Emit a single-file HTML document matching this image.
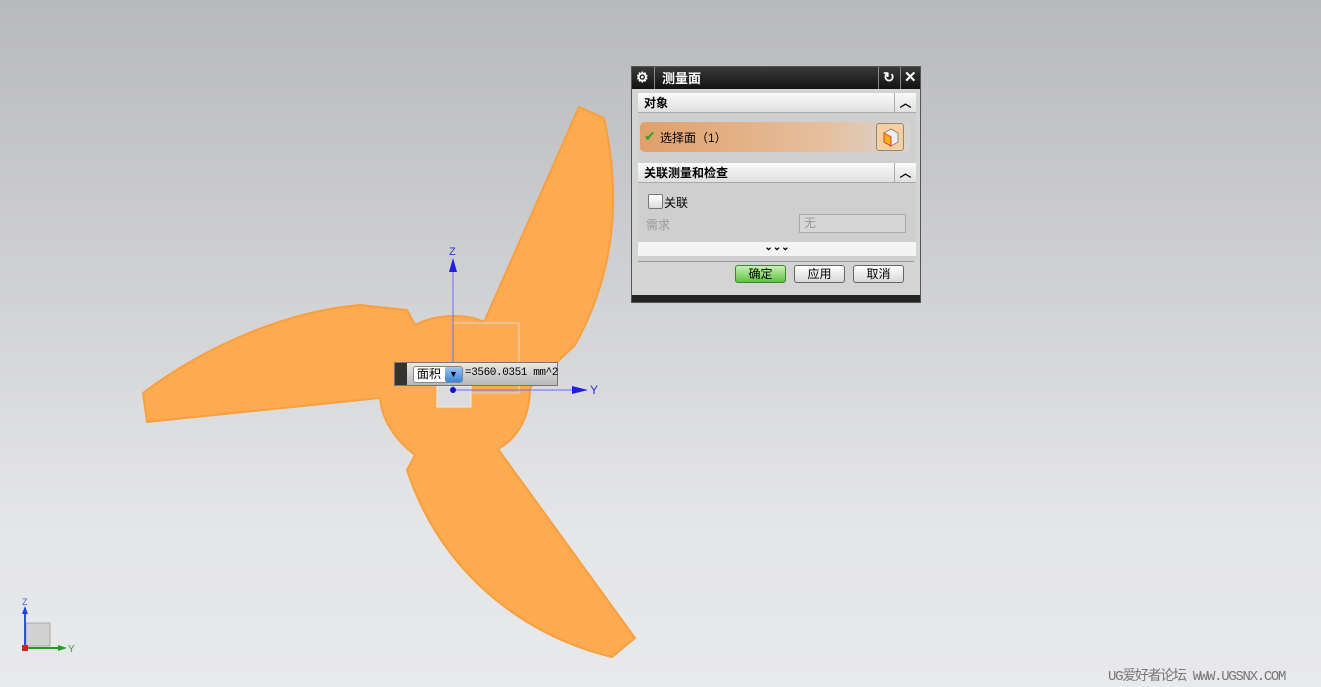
<!DOCTYPE html>
<html><head><meta charset="utf-8"><style>
*{margin:0;padding:0;box-sizing:border-box}
body{width:1321px;height:687px;overflow:hidden;position:relative;background:linear-gradient(#b8b9bb 0%,#d2d3d5 45%,#e4e5e7 75%,#e8e9eb 100%);font-family:"Liberation Sans","Noto Sans CJK SC",sans-serif;font-size:12px}
.abs{position:absolute;white-space:nowrap}
.dlg{left:631px;top:66px;width:290px;height:237px;background:#d4d4d4;border:1px solid #555}
.tb{left:0;top:0;width:288px;height:22px;background:linear-gradient(#3a3a3a,#111);color:#fff;font-weight:bold;font-size:13px}
.sec{position:relative;background:linear-gradient(#fafafa,#e0e0e0);height:20px;font-weight:bold;font-size:12px;line-height:20px;padding-left:6px;border-bottom:1px solid #aaa}
.btn{top:198px;height:18px;border:1px solid #666;border-radius:3px;background:linear-gradient(#fff,#d8d8d8);text-align:center;line-height:16px;font-size:12px}
</style></head><body>
<svg class="abs" style="left:0;top:0" width="1321" height="687">
<path d="M143,393 C200,350 280,312 360,305 L407,310 L415,325 C440,312 470,315 484,322 L579,107 L604,118 C622,200 614,275 575,345 L530,388 C530,420 515,440 498,449 L635,638 L612,657 C520,635 440,570 407,470 L415,455 C395,440 382,420 380,398 L147,422 Z" fill="#fdaa50" stroke="#f8a040" stroke-width="2" stroke-linejoin="round"/>
<rect x="453" y="323" width="66" height="70" fill="none" stroke="#d8d8e0" stroke-width="1"/>
<rect x="437" y="386" width="34" height="21" fill="#dcdcdc" stroke="#eee"/>
<line x1="453" y1="262" x2="453" y2="392" stroke="#6a6aff" stroke-width="1"/>
<polygon points="449,272 457,272 453,258" fill="#2020e0"/>
<text x="449" y="255" font-size="11" fill="#3030d0" font-family="Liberation Sans">Z</text>
<line x1="453" y1="390" x2="580" y2="390" stroke="#6a6aff"/>
<polygon points="572,386 572,394 588,390" fill="#2020e0"/>
<text x="590" y="394" font-size="12" fill="#3030d0" font-family="Liberation Sans">Y</text>
<circle cx="453" cy="390" r="3" fill="#1010d0"/>
<rect x="26" y="623" width="24" height="23" fill="#d2d2d2" stroke="#aaa"/>
<line x1="25" y1="646" x2="25" y2="610" stroke="#3050e0" stroke-width="2"/>
<polygon points="22,614 28,614 25,606" fill="#2040e0"/>
<text x="22" y="605" font-size="9" fill="#4060e0">Z</text>
<line x1="25" y1="648" x2="62" y2="648" stroke="#20a020" stroke-width="2"/>
<polygon points="58,645 58,651 67,648" fill="#20a020"/>
<text x="68" y="652" font-size="10" fill="#30a030">Y</text>
<rect x="22" y="645" width="6" height="6" fill="#d02020"/>
</svg>
<div class="abs" style="left:394px;top:362px;width:164px;height:24px;background:linear-gradient(#e8e8e8,#b8b8b8);border:1px solid #777">
 <div class="abs" style="left:0;top:0;width:12px;height:22px;background:#333"></div>
 <div class="abs" style="left:18px;top:3px;width:50px;height:17px;background:#fff;border:1px solid #888;border-radius:3px;font-size:12px;line-height:15px;padding-left:3px">面积</div>
 <div class="abs" style="left:50px;top:4px;width:17px;height:15px;background:linear-gradient(#9cc8f4,#3a82d8);border-radius:2px;color:#000;font-size:9px;text-align:center;line-height:15px">▼</div>
 <div class="abs" style="left:70px;top:4px;font-size:11px;font-family:'Liberation Mono',monospace;letter-spacing:-0.4px">=3560.0351 mm^2</div>
</div>
<div class="abs dlg">
 <div class="abs tb"><span class="abs" style="left:4px;top:2px;font-size:14px">⚙</span><div class="abs" style="left:22px;top:0;width:1px;height:22px;background:#888"></div><span class="abs" style="left:30px;top:1px">测量面</span>
 <div class="abs" style="left:246px;top:0;width:1px;height:22px;background:#888"></div><span class="abs" style="left:251px;top:2px;font-size:14px">↻</span><div class="abs" style="left:268px;top:0;width:1px;height:22px;background:#888"></div><span class="abs" style="left:272px;top:1px;font-size:15px">✕</span></div>
 <div class="abs" style="left:6px;top:26px;width:278px;height:168px;background:#cfcfcf">
  <div class="sec">对象<span class="abs" style="right:0;top:0;width:22px;height:20px;border-left:1px solid #aaa;text-align:center">︿</span></div>
  <div class="abs" style="left:2px;top:29px;width:270px;height:30px;border-radius:5px;background:linear-gradient(90deg,#e0a06a,#e6c0a0 70%,#d8d4d0)"><span class="abs" style="left:4px;top:6px;color:#2a2;font-size:14px">✔</span><span class="abs" style="left:20px;top:7px">选择面（1）</span></div>
  <div class="abs" style="left:238px;top:30px;width:28px;height:28px;border:1px solid #888;background:#f8d0a0;border-radius:3px"><svg width="26" height="26"><polygon points="7,9 14,5 21,9 21,18 14,22 7,18" fill="#eee" stroke="#888"/><polygon points="7,9 14,13 14,22 7,18" fill="#f6b020" stroke="#e04020"/></svg></div>
  <div class="abs" style="left:0;top:70px;width:278px"><div class="sec">关联测量和检查<span class="abs" style="right:0;top:0;width:22px;height:20px;border-left:1px solid #aaa;text-align:center">︿</span></div></div>
  <div class="abs" style="left:10px;top:101px;width:15px;height:15px;border:1px solid #777;background:linear-gradient(#fff,#ddd);border-radius:2px"></div>
  <span class="abs" style="left:26px;top:101px">关联</span>
  <span class="abs" style="left:8px;top:123px;color:#999">需求</span>
  <div class="abs" style="left:161px;top:121px;width:107px;height:19px;border:1px solid #aaa;background:#d6d6d6;color:#999;padding-left:4px;line-height:17px">无</div>
  <div class="abs" style="left:0;top:149px;width:278px;height:14px;background:#f4f4f4;text-align:center;font-size:10px;line-height:12px;font-weight:bold">⌄⌄⌄</div>
 </div>
 <div class="abs" style="left:6px;top:194px;width:276px;height:1px;background:#999"></div>
 <div class="abs btn" style="left:103px;width:51px;background:linear-gradient(#c8f0b8,#60c040);border-color:#3a8a2a">确定</div>
 <div class="abs btn" style="left:162px;width:51px">应用</div>
 <div class="abs btn" style="left:221px;width:51px">取消</div>
 <div class="abs" style="left:0;top:228px;width:288px;height:7px;background:#222"></div>
</div>
<div class="abs" style="left:1108px;top:665px;font-size:14px;color:#777;font-family:'Liberation Mono','Noto Sans CJK SC',monospace;letter-spacing:-1.3px">UG爱好者论坛 WWW.UGSNX.COM</div>
</body></html>
